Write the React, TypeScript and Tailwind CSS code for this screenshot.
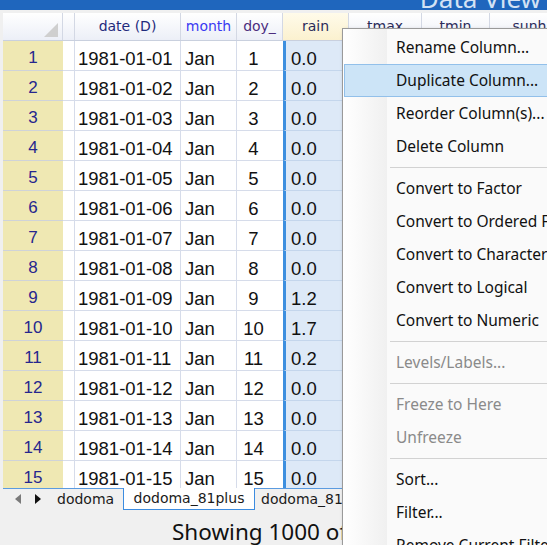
import React from 'react';

const cols = [
  { key: 'date', label: 'date (D)', w: 106, color: 'text-[#1f2a7c]' },
  { key: 'month', label: 'month', w: 56, color: 'text-[#3a3af2]' },
  { key: 'doy', label: 'doy_', w: 46, color: 'text-[#4b2d7e]' },
  { key: 'rain', label: 'rain', w: 66, color: 'text-[#2b2b5a]' },
  { key: 'tmax', label: 'tmax', w: 73, color: 'text-[#2b2b5a]' },
  { key: 'tmin', label: 'tmin', w: 68, color: 'text-[#2b2b5a]' },
  { key: 'sunh', label: 'sunh', w: 80, color: 'text-[#2b2b5a]' },
];

const rain = ['0.0', '0.0', '0.0', '0.0', '0.0', '0.0', '0.0', '0.0', '1.2', '1.7', '0.2', '0.0', '0.0', '0.0', '0.0'];

const rows = rain.map((r, i) => {
  const d = String(i + 1).padStart(2, '0');
  return { n: i + 1, date: `1981-01-${d}`, month: 'Jan', doy: String(i + 1), rain: r };
});

type Item = { label?: string; sep?: boolean; disabled?: boolean; active?: boolean };

const menu: Item[] = [
  { label: 'Rename Column...' },
  { label: 'Duplicate Column...', active: true },
  { label: 'Reorder Column(s)...' },
  { label: 'Delete Column' },
  { sep: true },
  { label: 'Convert to Factor' },
  { label: 'Convert to Ordered Factor' },
  { label: 'Convert to Character' },
  { label: 'Convert to Logical' },
  { label: 'Convert to Numeric' },
  { sep: true },
  { label: 'Levels/Labels...', disabled: true },
  { sep: true },
  { label: 'Freeze to Here', disabled: true },
  { label: 'Unfreeze', disabled: true },
  { sep: true },
  { label: 'Sort...' },
  { label: 'Filter...' },
  { label: 'Remove Current Filter' },
];

export default function App() {
  return (
    <div className="relative w-[547px] h-[545px] overflow-hidden bg-[#f0f0f0] font-['Liberation_Sans',sans-serif]">
      {/* title bar */}
      <div className="h-[10px] bg-[#1f66bd] overflow-hidden flex justify-end pr-[6px]">
        <span className="-mt-[15px] text-[26px] leading-[26px] text-[#d3e2f4] font-['Noto_Sans',sans-serif] whitespace-nowrap">
          Data View
        </span>
      </div>
      <div className="h-[3px]" />

      {/* grid */}
      <div className="ml-[3px] h-[475px] overflow-hidden bg-white">
        <div className="flex h-[28px] border-b border-[#c9d0de] bg-gradient-to-b from-white to-[#eceff7] font-['DejaVu_Sans',sans-serif] text-[14px]">
          <div className="relative w-[60px] shrink-0 border-r border-[#d3d8e4]">
            <svg className="absolute right-[4px] bottom-[3px]" width="14" height="14" viewBox="0 0 14 14">
              <polygon points="14,0 14,14 0,14" fill="#cfcfcf" />
            </svg>
          </div>
          <div className="w-[12px] shrink-0 border-r border-[#d3d8e4]" />
          {cols.map((c) =>
            c.key === 'rain' ? (
              <div
                key={c.key}
                style={{ width: c.w }}
                className="shrink-0 border-r border-[#d3d8e4] bg-gradient-to-b from-[#fffbea] to-[#fbf1cf] flex items-center justify-center text-[#2b2b5a]"
              >
                {c.label}
              </div>
            ) : (
              <div
                key={c.key}
                style={{ width: c.w }}
                className={`shrink-0 border-r border-[#d3d8e4] flex items-center justify-center overflow-hidden whitespace-nowrap ${c.color}`}
              >
                {c.label}
              </div>
            )
          )}
        </div>

        {rows.map((r) => (
          <div key={r.n} className="flex h-[30px] text-[18.5px] text-[#111]">
            <div className="w-[60px] shrink-0 bg-[#efe8b3] border-b border-[#cfd3d8] flex items-center justify-center pt-[5px] text-[17px] text-[#26268e]">
              {r.n}
            </div>
            <div className="w-[12px] shrink-0 border-b border-r border-[#d6dcea]" />
            <div className="w-[106px] shrink-0 border-b border-r border-[#d6dcea] flex items-center pl-[3px] pt-[6px]">
              {r.date}
            </div>
            <div className="w-[56px] shrink-0 border-b border-r border-[#d6dcea] flex items-center pl-[4px] pt-[6px]">
              {r.month}
            </div>
            <div className="w-[46px] shrink-0 border-b border-[#d6dcea] flex items-center justify-center pr-[13px] pt-[6px]">
              {r.doy}
            </div>
            <div className="w-[66px] shrink-0 bg-[#dde9f7] border-l-[3px] border-l-[#3d8fdf] border-b border-b-[#c4d6ec] flex items-center pl-[5px] pt-[6px]">
              {r.rain}
            </div>
            <div className="flex-1 border-b border-[#d6dcea]" />
          </div>
        ))}
      </div>

      {/* sheet tabs */}
      <div className="flex h-[21px] ml-[3px] border-t border-[#5b9be0] font-['DejaVu_Sans',sans-serif] text-[14px] text-[#1a1a1a]">
        <div className="flex items-center gap-[14px] pl-[12px] w-[49px] shrink-0">
          <svg width="6" height="10" viewBox="0 0 6 10">
            <polygon points="6,0 6,10 0,5" fill="#7a7a7a" />
          </svg>
          <svg width="6" height="10" viewBox="0 0 6 10">
            <polygon points="0,0 0,10 6,5" fill="#111" />
          </svg>
        </div>
        <div className="w-[71px] shrink-0 flex items-center pl-[5px]">dodoma</div>
        <div className="w-[132px] shrink-0 -mt-px h-[22px] bg-white border-x border-b border-[#3c8ce0] flex items-center justify-center">
          dodoma_81plus
        </div>
        <div className="flex items-center pl-[6px] whitespace-nowrap">dodoma_81</div>
      </div>

      {/* status */}
      <div className="pl-[172px] pt-[8px] text-[22.5px] leading-[30px] text-[#111] font-['Noto_Sans',sans-serif] whitespace-nowrap">
        Showing 1000 of 1000 rows
      </div>

      {/* context menu */}
      <div className="absolute left-[342px] top-[28px] w-[260px] h-[540px] bg-[#fafafa] border border-[#9a9a9a] pt-[2px] font-['Noto_Sans',sans-serif] text-[15.5px] shadow-[2px_2px_4px_rgba(0,0,0,0.3)]">
        <div className="absolute left-0 top-0 bottom-0 w-[44px] bg-gradient-to-r from-white to-[#f0f0f0]" />
        {menu.map((m, i) =>
          m.sep ? (
            <div key={i} className="relative h-[9px] flex items-center pl-[47px]">
              <div className="h-px w-full bg-[#d2d2d2]" />
            </div>
          ) : (
            <div
              key={i}
              className={`relative h-[33px] flex items-center whitespace-nowrap ${
                m.active ? 'mx-[1px] bg-[#cce4f7] border border-[#92c0ea] pl-[51px]' : 'pl-[53px]'
              } ${m.disabled ? 'text-[#8a8a8a]' : 'text-[#111]'}`}
            >
              {m.label}
            </div>
          )
        )}
      </div>
    </div>
  );
}
